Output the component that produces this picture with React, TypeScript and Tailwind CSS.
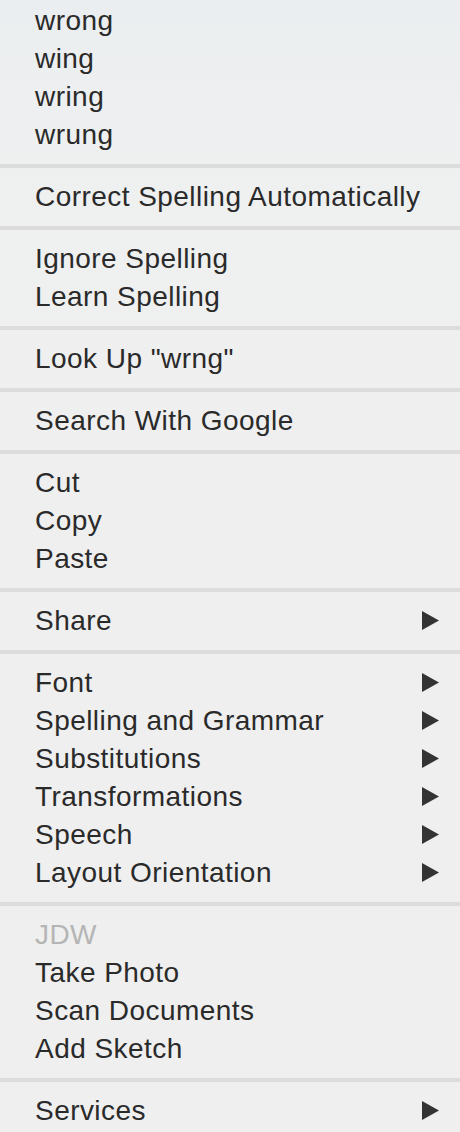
import React from "react";

type Item = { label: string; sub?: boolean; disabled?: boolean };

const groups: Item[][] = [
  [{ label: "wrong" }, { label: "wing" }, { label: "wring" }, { label: "wrung" }],
  [{ label: "Correct Spelling Automatically" }],
  [{ label: "Ignore Spelling" }, { label: "Learn Spelling" }],
  [{ label: 'Look Up "wrng"' }],
  [{ label: "Search With Google" }],
  [{ label: "Cut" }, { label: "Copy" }, { label: "Paste" }],
  [{ label: "Share", sub: true }],
  [
    { label: "Font", sub: true },
    { label: "Spelling and Grammar", sub: true },
    { label: "Substitutions", sub: true },
    { label: "Transformations", sub: true },
    { label: "Speech", sub: true },
    { label: "Layout Orientation", sub: true },
  ],
  [
    { label: "JDW", disabled: true },
    { label: "Take Photo" },
    { label: "Scan Documents" },
    { label: "Add Sketch" },
  ],
  [{ label: "Services", sub: true }],
];

function Arrow() {
  return (
    <svg width="17" height="19" viewBox="0 0 17 19" className="shrink-0">
      <polygon points="0,0 17,9.5 0,19" fill="#333333" />
    </svg>
  );
}

export default function App() {
  return (
    <div
      className="w-[460px] h-[1132px] overflow-hidden bg-[linear-gradient(to_bottom,#ebeef0_0%,#eff0f0_18%,#efefef_40%,#efefef_100%)] pt-[1px]"
      style={{ fontFamily: '"Liberation Sans", Arial, sans-serif' }}
    >
      {groups.map((g, gi) => (
        <div key={gi}>
          {gi > 0 && (
            <div className="pt-[11px] pb-[9px]">
              <div className="h-[4px] bg-[#dcdcdc]" />
            </div>
          )}
          {g.map((it) => (
            <div
              key={it.label}
              className="h-[38px] flex items-center justify-between pl-[35px] pr-[21px]"
            >
              <span
                className={
                  "mt-[2px] text-[28px] leading-[38px] tracking-[0.45px] " +
                  (it.disabled ? "text-[#b5b5b5]" : "text-[#2a2a2a]")
                }
              >
                {it.label}
              </span>
              {it.sub && <Arrow />}
            </div>
          ))}
        </div>
      ))}
    </div>
  );
}
